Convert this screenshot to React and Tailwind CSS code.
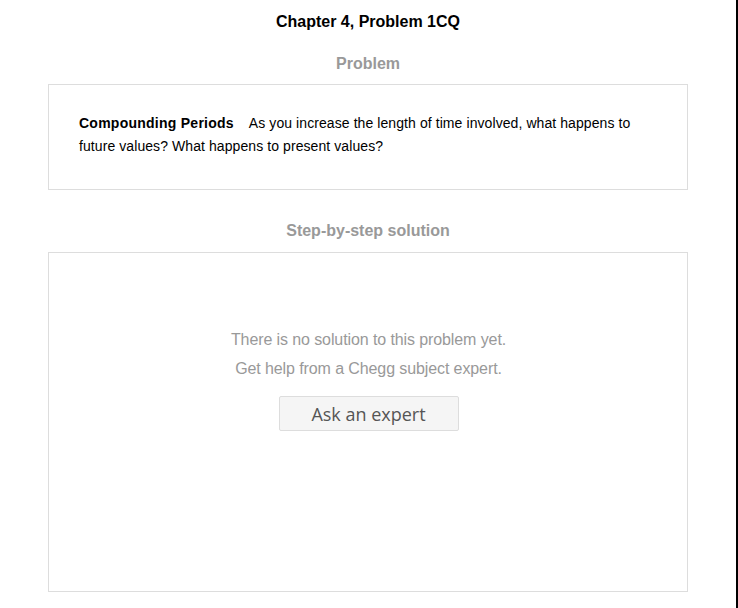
const App = () => {
  return (
    <div className="min-h-[608px] w-[738px] bg-white font-['Liberation_Sans',Arial,sans-serif]">
      <div className="min-h-[608px] w-[738px] border-r-2 border-black">
        <div className="w-[736px] px-12">
          <h1 className="pt-[10px] text-center text-base font-bold leading-6 text-black">
            Chapter 4, Problem 1CQ
          </h1>

          <h2 className="mt-[18px] text-center text-base font-bold leading-6 text-[#999]">Problem</h2>
          <div className="mt-[8px] border border-[#ddd] pb-[31px] pl-[30px] pr-[30px] pt-[27px] text-sm leading-[23px] text-black">
            <p>
              <span className="font-bold tracking-[0.25px]">Compounding Periods</span>
              <span className="ml-[15px] tracking-[0.08px]">
                As you increase the length of time involved, what happens to future values? What happens to present
                values?
              </span>
            </p>
          </div>

          <h2 className="mt-[29px] text-center text-base font-bold leading-6 text-[#999]">Step-by-step solution</h2>
          <div className="mt-[9px] flex h-[340px] flex-col items-center border border-[#ddd] pl-px pt-[72px]">
            <p className="text-base leading-[29px] tracking-[-0.1px] text-[#999]">
              There is no solution to this problem yet.
            </p>
            <p className="text-base leading-[29px] tracking-[-0.1px] text-[#999]">
              Get help from a Chegg subject expert.
            </p>
            <button className="mt-[13px] flex h-[35px] w-[180px] items-center justify-center rounded-[2px] border border-[#ddd] bg-[#f5f5f5] font-['Open_Sans',sans-serif] text-lg text-[#555]">
              Ask an expert
            </button>
          </div>
        </div>
      </div>
    </div>
  );
};

export default App;
